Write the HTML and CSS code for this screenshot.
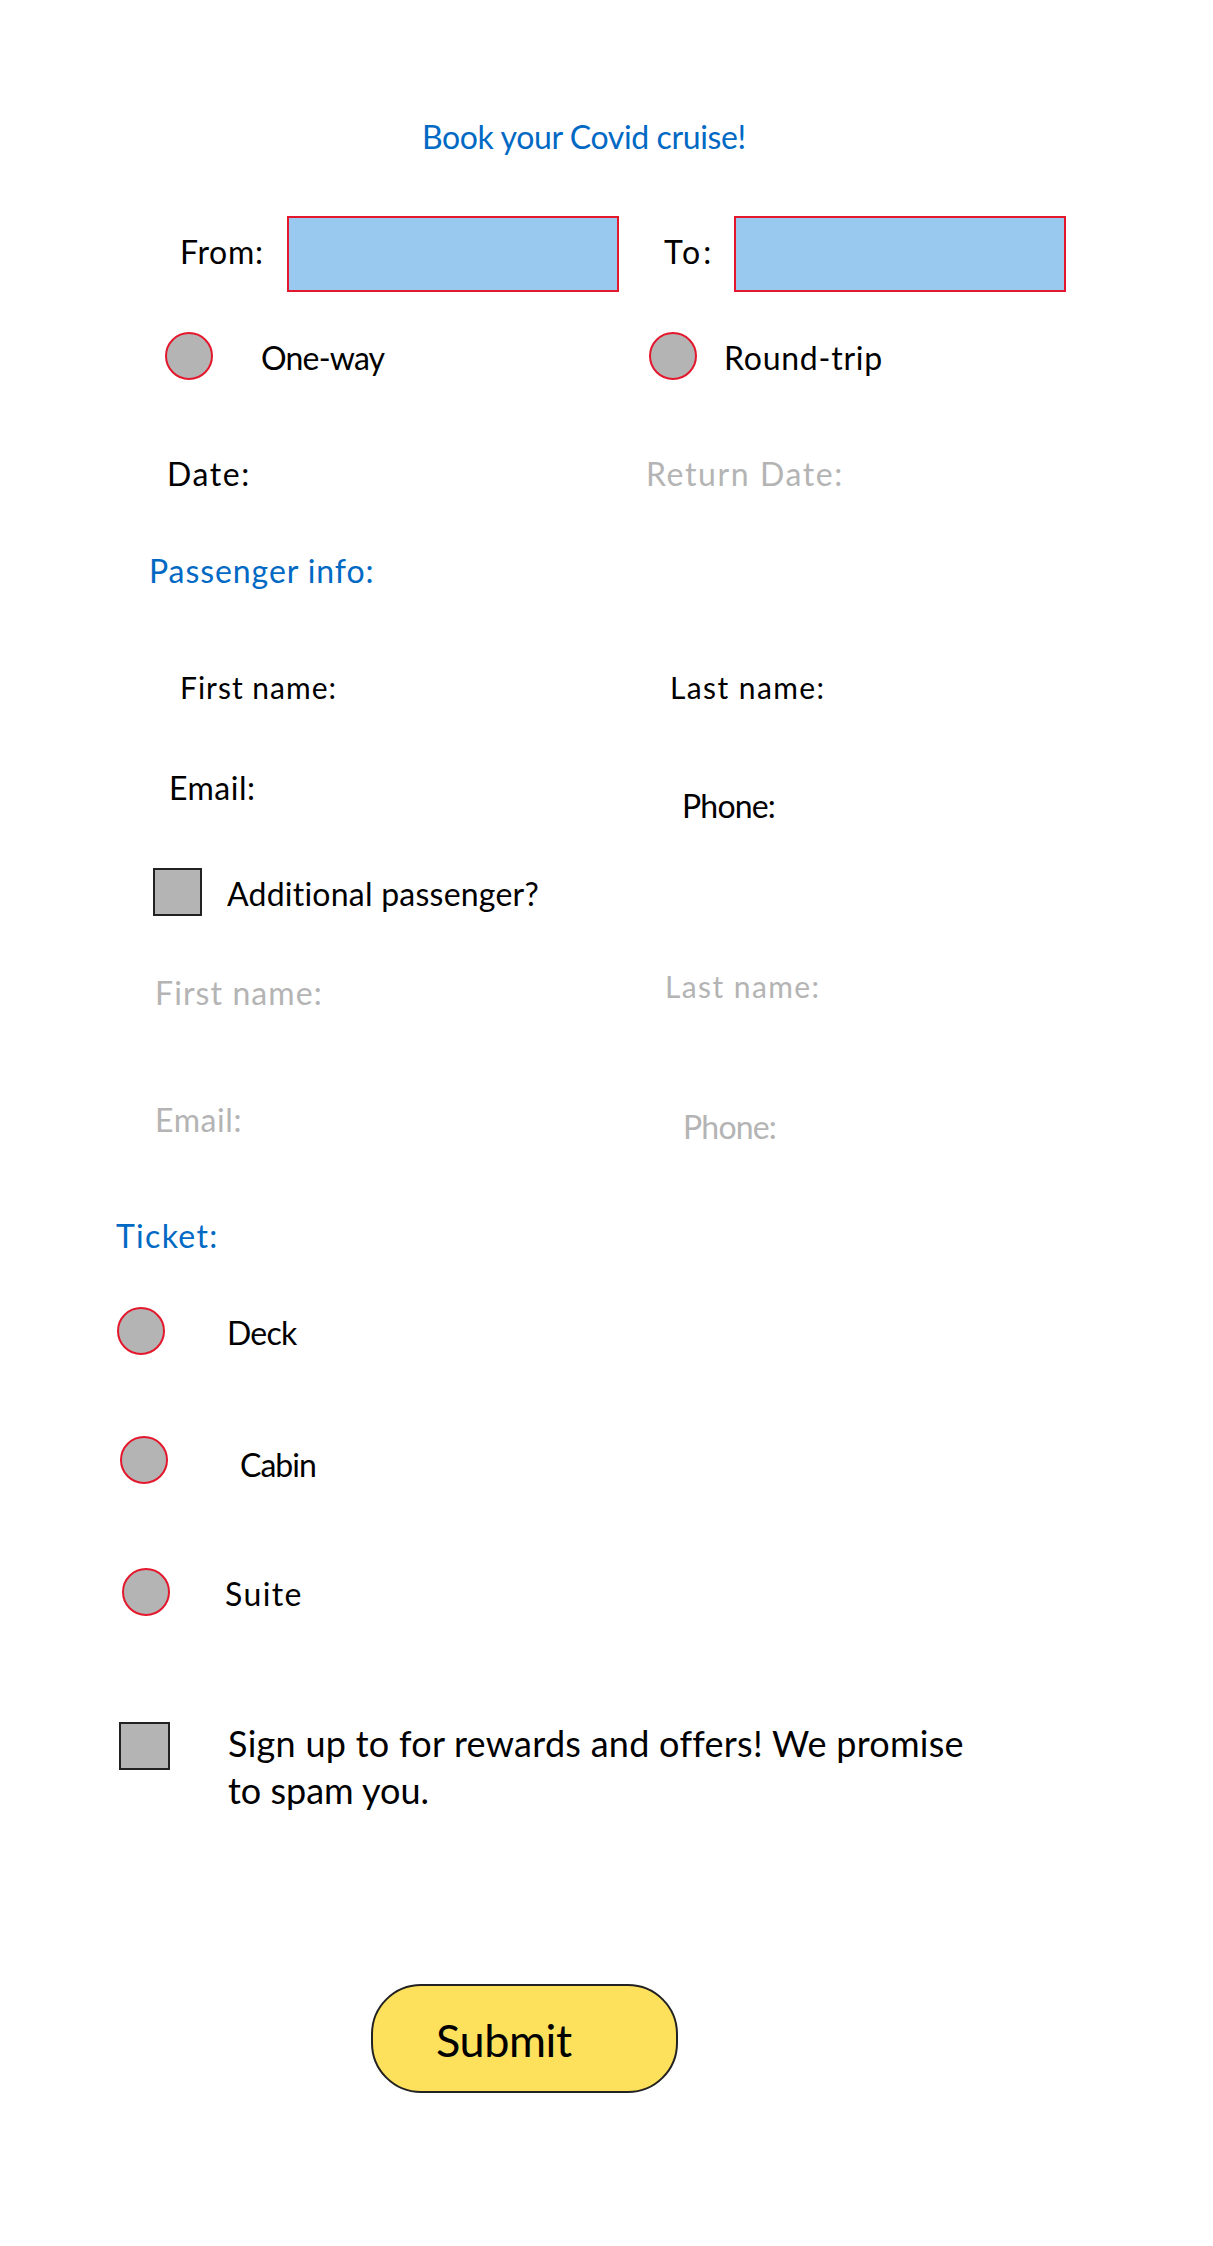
FILE: index.html
```html
<!DOCTYPE html>
<html lang="en">
<head>
<meta charset="utf-8">
<title>Book your Covid cruise!</title>
<link rel="stylesheet" href="styles.css">
</head>
<body>
<form class="booking">
  <h1 class="heading title">Book your Covid cruise!</h1>

  <div class="row row-route">
    <label class="cell from"><span class="label">From:</span><span class="field"></span></label>
    <label class="cell to"><span class="label">To:</span><span class="field"></span></label>
  </div>
  <div class="row row-type">
    <label class="cell one-way"><span class="radio"></span><span class="label">One-way</span></label>
    <label class="cell round-trip"><span class="radio"></span><span class="label">Round-trip</span></label>
  </div>
  <div class="row row-date">
    <label class="cell date"><span class="label">Date:</span></label>
    <label class="cell return-date disabled"><span class="label">Return Date:</span></label>
  </div>

  <h2 class="heading passenger">Passenger info:</h2>
  <div class="row row-name">
    <label class="cell first-name"><span class="label">First name:</span></label>
    <label class="cell last-name"><span class="label">Last name:</span></label>
  </div>
  <div class="row row-contact">
    <label class="cell email"><span class="label">Email:</span></label>
    <label class="cell phone"><span class="label">Phone:</span></label>
  </div>
  <label class="option additional"><span class="checkbox"></span><span class="label">Additional passenger?</span></label>
  <div class="row row-extra-name disabled">
    <label class="cell extra-first"><span class="label">First name:</span></label>
    <label class="cell extra-last"><span class="label">Last name:</span></label>
  </div>
  <div class="row row-extra-contact disabled">
    <label class="cell extra-email"><span class="label">Email:</span></label>
    <label class="cell extra-phone"><span class="label">Phone:</span></label>
  </div>

  <h2 class="heading ticket">Ticket:</h2>
  <label class="option deck"><span class="radio"></span><span class="label">Deck</span></label>
  <label class="option cabin"><span class="radio"></span><span class="label">Cabin</span></label>
  <label class="option suite"><span class="radio"></span><span class="label">Suite</span></label>
  <label class="option rewards"><span class="checkbox"></span><span class="label"><span class="line">Sign up to for rewards and offers! We promise</span> <span class="line line-end">to spam you.</span></span></label>

  <button class="submit" type="button">Submit</button>
</form>
</body>
</html>
```
FILE: styles.css
```css
* { box-sizing: border-box; }

body {
  margin: 0;
  background: #fff;
  color: #000;
  font: 32px/42px Lato, "Open Sans", sans-serif;
}

.booking {
  width: 1213px;
  height: 2246px;
  padding-top: 116px;
}

.heading {
  margin: 0;
  color: #0069c4;
  font-size: 32px;
  font-weight: 400;
  line-height: 42px;
  white-space: nowrap;
}
.title { height: 100px; padding-left: 422px; letter-spacing: -0.38px; }
.passenger { height: 116px; padding-left: 149px; letter-spacing: 0.92px; }
.ticket { height: 92px; padding-left: 116px; letter-spacing: 1.3px; }

.row { display: grid; grid-template-columns: 600px 1fr; }
.cell, .option { display: flex; align-items: flex-start; }
.label { white-space: nowrap; }
.disabled { color: #b4b4b4; }

/* Controls */
.field {
  flex: none;
  width: 332px;
  height: 76px;
  border: 2px solid #e4182d;
  background: #9ac9ef;
}
.radio {
  flex: none;
  width: 48px;
  height: 48px;
  border: 2px solid #e4182d;
  border-radius: 50%;
  background: #b4b4b4;
}
.checkbox {
  flex: none;
  width: 49px;
  height: 48px;
  border: 2px solid #222;
  background: #b4b4b4;
}

/* Route */
.row-route { height: 116px; }
.row-route .label { flex: none; margin-top: 15px; }
.from { padding-left: 180px; }
.from .label { width: 107px; letter-spacing: 0.7px; }
.to { padding-left: 64px; }
.to .label { width: 70px; letter-spacing: 3px; }

.row-type { height: 121px; }
.row-type .label { margin-top: 5px; }
.one-way { padding-left: 165px; gap: 48px; letter-spacing: -0.8px; }
.round-trip { padding-left: 49px; gap: 27px; letter-spacing: 0.75px; }

.row-date { height: 97px; }
.date { padding-left: 167px; letter-spacing: 1.6px; }
.return-date { padding-left: 46px; letter-spacing: 1.6px; }

/* Passengers */
.row-name { height: 101px; font-size: 30px; }
.first-name { padding-left: 180px; letter-spacing: 1px; }
.last-name { padding-left: 70px; letter-spacing: 1.4px; }

.row-contact { height: 101px; }
.email { padding-left: 169px; letter-spacing: 0.5px; }
.phone { padding: 18px 0 0 82px; letter-spacing: -0.8px; }

.additional { height: 97px; padding-left: 153px; gap: 25px; letter-spacing: 0.23px; }
.additional .label { margin-top: 5px; }

.row-extra-name { height: 134px; }
.extra-first { padding: 7px 0 0 155px; letter-spacing: 1.1px; }
.extra-last { padding-left: 65px; font-size: 30px; letter-spacing: 1.4px; }

.row-extra-contact { height: 116px; }
.extra-email { padding-left: 155px; letter-spacing: 0.6px; }
.extra-phone { padding: 7px 0 0 83px; letter-spacing: -0.8px; }

/* Ticket options */
.deck { height: 129px; padding-left: 117px; gap: 62px; letter-spacing: -0.8px; }
.deck .label { margin-top: 5px; }
.cabin { height: 132px; padding-left: 120px; gap: 72px; letter-spacing: -0.97px; }
.cabin .label { margin-top: 8px; }
.suite { height: 154px; padding-left: 122px; gap: 55px; letter-spacing: 1.4px; }
.suite .label { margin-top: 5px; }

.rewards { height: 262px; padding-left: 119px; gap: 58px; font-size: 36px; line-height: 47px; }
.rewards .checkbox { width: 51px; }
.rewards .label { margin-top: -2px; letter-spacing: 0.27px; }
.line { display: block; }
.line-end { letter-spacing: 0; }

.submit {
  display: block;
  width: 307px;
  height: 109px;
  margin-left: 371px;
  padding: 2px 0 0 63px;
  border: 2px solid #222;
  border-radius: 50px;
  background: #fde05c;
  color: #000;
  font: 45px/60px Lato, "Open Sans", sans-serif;
  letter-spacing: -0.41px;
  text-align: left;
}
```
